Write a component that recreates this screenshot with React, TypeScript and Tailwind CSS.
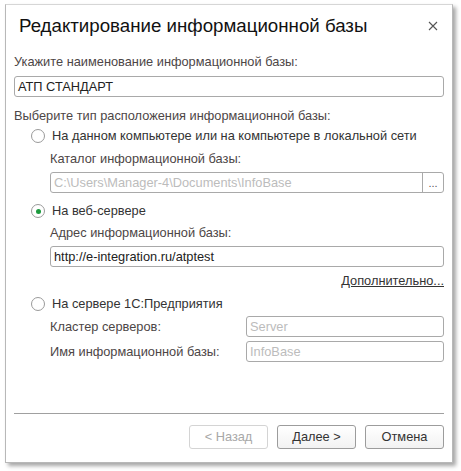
import React from "react";

const Radio: React.FC<{ checked?: boolean; label: string; className?: string }> = (props) => (
    <div className={"flex items-center h-[18px] pl-[17px] " + (props.className ?? "")}>
        <span className="w-[14px] h-[14px] rounded-full border border-[#9a9a9a] bg-white flex items-center justify-center">
            {props.checked && <span className="w-[5px] h-[5px] rounded-full bg-[#1c9a3e]" />}
        </span>
        <span className="ml-[7px] text-[#333333]">{props.label}</span>
    </div>
);

const Field: React.FC<{ value: string; muted?: boolean; className?: string; children?: React.ReactNode }> = (props) => (
    <div className={"flex h-[21px] border border-[#a9a9a9] rounded-[3px] bg-white overflow-hidden " + (props.className ?? "")}>
        <div className={"flex-1 flex items-center pl-[3px] " + (props.muted ? "text-[#bcbcbc]" : "text-[#222222]")}>
            {props.value}
        </div>
        {props.children}
    </div>
);

const Button: React.FC<{ label: string; disabled?: boolean }> = (props) => (
    <div
        className={
            "w-[79px] h-[24px] rounded-[3px] border flex items-center justify-center " +
            (props.disabled
                ? "border-[#d4d4d4] text-[#a8a8a8] bg-white"
                : "border-[#9c9c9c] text-[#333333] bg-gradient-to-b from-white to-[#f2f2f2]")
        }
    >
        {props.label}
    </div>
);

export default function App() {
    return (
        <div className="w-[461px] h-[471px] bg-white pt-[4px] pl-[5px] font-['Liberation_Sans',Arial,sans-serif] text-[12.8px] leading-[18px]">
            <div className="w-[448px] h-[459px] border border-[#b8b8b8] border-t-[#d6d6d6] bg-white shadow-[3px_3px_4px_rgba(0,0,0,0.35)] flex flex-col px-[8px]">
                <div className="h-[41px] flex items-center justify-between pl-[5px]">
                    <span className="text-[18.7px] text-[#111111]">Редактирование информационной базы</span>
                    <svg width="10" height="10" viewBox="0 0 10 10" className="mr-[6px]">
                        <path d="M1 1L9 9M9 1L1 9" stroke="#555555" strokeWidth="1.1" />
                    </svg>
                </div>

                <div className="mt-[7px] text-[#4d4646]">Укажите наименование информационной базы:</div>
                <Field value="АТП СТАНДАРТ" className="mt-[5px]" />

                <div className="mt-[10px] text-[#4d4646]">Выберите тип расположения информационной базы:</div>
                <Radio label="На данном компьютере или на компьютере в локальной сети" className="mt-[2px]" />
                <div className="pl-[36px]">
                    <div className="mt-[5px] text-[#4d4646]">Каталог информационной базы:</div>
                    <Field value="C:\Users\Manager-4\Documents\InfoBase" muted className="mt-[4px]">
                        <div className="w-[21px] border-l border-[#a9a9a9] flex items-center justify-center text-[#555555] text-[11px]">
                            ...
                        </div>
                    </Field>
                </div>

                <Radio checked label="На веб-сервере" className="mt-[9px]" />
                <div className="pl-[36px]">
                    <div className="mt-[4px] text-[#4d4646]">Адрес информационной базы:</div>
                    <Field value="http://e-integration.ru/atptest" className="mt-[4px]" />
                    <div className="mt-[5px] text-right">
                        <span className="underline text-[#333333]">Дополнительно...</span>
                    </div>
                </div>

                <Radio label="На сервере 1С:Предприятия" className="mt-[5px]" />
                <div className="pl-[36px]">
                    <div className="mt-[3px] flex items-center">
                        <span className="w-[196px] text-[#4d4646]">Кластер серверов:</span>
                        <Field value="Server" muted className="flex-1" />
                    </div>
                    <div className="mt-[4px] flex items-center">
                        <span className="w-[196px] text-[#4d4646]">Имя информационной базы:</span>
                        <Field value="InfoBase" muted className="flex-1" />
                    </div>
                </div>

                <div className="flex-1" />
                <div className="border-t border-[#a0a0a0]" />
                <div className="mt-[11px] mb-[13px] flex justify-end gap-[9px]">
                    <Button label="< Назад" disabled />
                    <Button label="Далее >" />
                    <Button label="Отмена" />
                </div>
            </div>
        </div>
    );
}
